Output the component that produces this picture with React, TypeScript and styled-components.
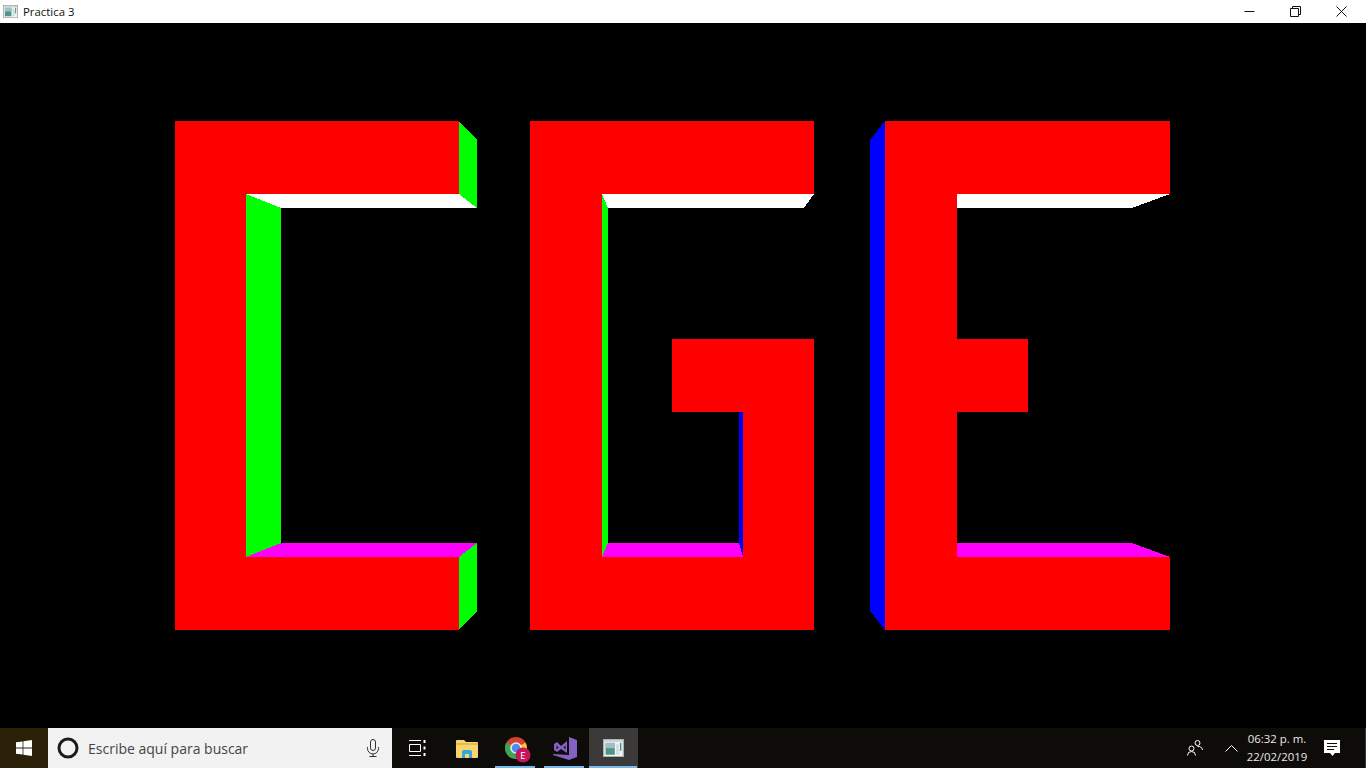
import React from 'react';
import styled, { createGlobalStyle } from 'styled-components';

const GlobalStyle = createGlobalStyle`
  html, body, #root {
    margin: 0;
    height: 100%;
    background: #000;
  }
  body {
    overflow: hidden;
    font-family: 'Open Sans', 'Noto Sans', sans-serif;
  }
`;

const Screen = styled.div`
  display: flex;
  flex-direction: column;
  width: 1366px;
  height: 768px;
`;

const TitleBar = styled.div`
  display: flex;
  align-items: center;
  flex: 0 0 23px;
  background: #fff;
  padding-left: 3px;
`;

const TitleText = styled.span`
  margin-left: 5px;
  font-size: 11.4px;
  line-height: 23px;
  color: #111;
`;

const WindowButtons = styled.div`
  display: flex;
  margin-left: auto;
  margin-right: 2px;
`;

const WindowButton = styled.div`
  display: flex;
  align-items: center;
  justify-content: center;
  width: 46px;
  height: 23px;
  color: #111;
`;

const Viewport = styled.svg`
  display: block;
  flex: 0 0 705px;
  width: 1366px;
  height: 705px;
  background: #000;
`;

const Taskbar = styled.div`
  display: flex;
  align-items: stretch;
  flex: 0 0 40px;
  background: #0e0c09;
`;

const StartButton = styled.div`
  display: flex;
  align-items: center;
  justify-content: center;
  width: 48px;
  background: #2a2108;
`;

const SearchBox = styled.div`
  display: flex;
  align-items: center;
  width: 344px;
  background: #f2f2f2;
  padding: 0 12px 0 9px;
  box-sizing: border-box;
`;

const SearchText = styled.span`
  margin-left: 9px;
  flex: 1;
  font-size: 14px;
  color: #444;
`;

const TaskButton = styled.div<{ $running?: boolean; $active?: boolean; $wide?: boolean }>`
  position: relative;
  display: flex;
  align-items: center;
  justify-content: center;
  width: ${({ $wide }) => ($wide ? 50 : 49)}px;
  background: ${({ $active }) => ($active ? '#3b3a38' : 'transparent')};
  &:after {
    content: '';
    display: ${({ $running }) => ($running ? 'block' : 'none')};
    position: absolute;
    bottom: 0;
    left: ${({ $active }) => ($active ? '0' : '4px')};
    right: ${({ $active }) => ($active ? '1px' : '5px')};
    height: 2px;
    background: #76b9ed;
  }
`;

const ChromeIcon = styled.svg`
  margin: 4px 0 0 5px;
`;

const Tray = styled.div`
  display: flex;
  align-items: center;
  margin-left: auto;
  color: #fff;
`;

const TrayIcon = styled.div<{ $width: number }>`
  display: flex;
  align-items: center;
  justify-content: center;
  width: ${({ $width }) => $width}px;
`;

const Clock = styled.div`
  width: 70px;
  text-align: center;
  font-size: 11.4px;
  line-height: 18px;
  color: #e8e8e8;
  white-space: nowrap;
`;

const ShowDesktop = styled.div`
  width: 0;
  height: 40px;
  margin-left: 13px;
  border-left: 1px solid #3a3a3a;
`;

const RED = '#ff0000';
const GREEN = '#00ff00';
const BLUE = '#0000ff';
const MAGENTA = '#ff00ff';
const WHITE = '#ffffff';

// bevels first, the front faces of the letters go over them
const bevels: [string, string][] = [
  ['459,121 477,140 477,208 459,194', GREEN],
  ['246,194 459,194 477,208 281,208', WHITE],
  ['246,194 281,208 281,543 246,557', GREEN],
  ['246,557 281,543 477,543 459,557', MAGENTA],
  ['459,557 477,543 477,611 459,630', GREEN],
  ['602,194 814,194 804,208 608,208', WHITE],
  ['602,194 608,208 608,543 602,557', GREEN],
  ['602,557 608,543 739,543 743,557', MAGENTA],
  ['739,412 743,412 743,557 739,543', BLUE],
  ['870,140 885,121 885,630 870,611', BLUE],
  ['957,194 1170,194 1132,208 957,208', WHITE],
  ['957,543 1132,543 1170,557 957,557', MAGENTA],
];

const faces = [
  '175,121 459,121 459,194 246,194 246,557 459,557 459,630 175,630',
  '530,121 814,121 814,194 602,194 602,557 743,557 743,412 672,412 672,339 814,339 814,630 530,630',
  '885,121 1170,121 1170,194 957,194 957,339 1028,339 1028,412 957,412 957,557 1170,557 1170,630 885,630',
];

const AppIcon = ({ size }: { size: number }) => (
  <svg width={size} height={size * 0.875} viewBox="0 0 16 14">
    <rect x="0.5" y="0.5" width="15" height="13" fill="#f4f6f6" stroke="#a9b2b5" />
    <rect x="1" y="1" width="14" height="1.500" fill="#c9d6de" />
    <rect x="2" y="3" width="7" height="9" fill="#4f9389" />
    <rect x="2" y="3" width="7" height="4" fill="#a5bcc2" />
    <rect x="10" y="4" width="2.500" height="8" fill="#d3dfd8" />
    <rect x="13" y="3" width="1" height="6" fill="#3f8a80" />
  </svg>
);

const App = () => (
  <Screen>
    <GlobalStyle />
    <TitleBar>
      <AppIcon size={15} />
      <TitleText>Practica 3</TitleText>
      <WindowButtons>
        <WindowButton>
          <svg width="11" height="11" viewBox="0 0 11 11">
            <path d="M0.5 5.5h10" stroke="currentColor" fill="none" />
          </svg>
        </WindowButton>
        <WindowButton>
          <svg width="11" height="11" viewBox="0 0 11 11">
            <path d="M0.5 2.5h8v8h-8zM2.5 2.5v-2h8v8h-2" stroke="currentColor" fill="none" />
          </svg>
        </WindowButton>
        <WindowButton>
          <svg width="11" height="11" viewBox="0 0 11 11">
            <path d="M0.5 0.5l10 10M10.5 0.5l-10 10" stroke="currentColor" fill="none" />
          </svg>
        </WindowButton>
      </WindowButtons>
    </TitleBar>

    <Viewport viewBox="0 23 1366 705" shapeRendering="crispEdges">
      {bevels.map(([points, color]) => (
        <polygon key={points} points={points} fill={color} />
      ))}
      {faces.map((points) => (
        <polygon key={points} points={points} fill={RED} />
      ))}
    </Viewport>

    <Taskbar>
      <StartButton>
        <svg width="16" height="16" viewBox="0 0 16 16" fill="#fff">
          <path d="M0 2.3l6.6-.9v6.2H0zM7.4 1.3L16 0v7.6H7.4zM0 8.4h6.6v6.2L0 13.7zM7.4 8.4H16V16l-8.6-1.3z" />
        </svg>
      </StartButton>
      <SearchBox>
        <svg width="22" height="22" viewBox="0 0 22 22">
          <circle cx="11" cy="11" r="9" fill="none" stroke="#1c1c1c" strokeWidth="3" />
        </svg>
        <SearchText>Escribe aquí para buscar</SearchText>
        <svg width="14" height="18" viewBox="0 0 14 18" fill="none" stroke="#333" strokeWidth="1">
          <rect x="4.5" y="0.5" width="5" height="11" rx="2.5" />
          <path d="M1.5 8v1.5a5.5 5.5 0 0 0 11 0V8M7 15v2.5M3.5 17.5h7" />
        </svg>
      </SearchBox>

      <TaskButton $wide>
        <svg width="17" height="16" viewBox="0 0 17 16" fill="none" stroke="#fff">
          <path d="M0 .5h12M0 15.5h12M.5 4.5h11v7H.5z" />
          <path d="M15.5 0v3M15.5 6.5v3M15.5 13v3" strokeWidth="2" />
        </svg>
      </TaskButton>
      <TaskButton>
        <svg width="22" height="19" viewBox="0 0 22 19">
          <path d="M0 2a1 1 0 0 1 1-1h7l2 2h11a1 1 0 0 1 1 1v14a1 1 0 0 1-1 1H1a1 1 0 0 1-1-1z" fill="#f9d56e" />
          <rect x="0" y="4" width="22" height="2" fill="#e7b94a" />
          <path d="M6 19v-6a2 2 0 0 1 2-2h6a2 2 0 0 1 2 2v6h-3v-4H9v4z" fill="#35a7dc" />
        </svg>
      </TaskButton>
      <TaskButton $running>
        <ChromeIcon width="26" height="26" viewBox="0 0 26 26">
          <circle cx="11" cy="11" r="11" fill="#d8402f" />
          <path d="M11 11L1.500 5.500A11 11 0 0 0 11 22z" fill="#3aa757" />
          <path d="M11 11v11A11 11 0 0 0 20.500 5.500z" fill="#fbc02d" />
          <circle cx="11" cy="11" r="5" fill="#4a8cf0" stroke="#e8e8e8" strokeWidth="1.600" />
          <circle cx="18" cy="18" r="7.500" fill="#c2185b" />
          <text x="18" y="21.500" fontSize="9.500" fill="#fff" textAnchor="middle" fontFamily="'Open Sans', sans-serif">E</text>
        </ChromeIcon>
      </TaskButton>
      <TaskButton $running>
        <svg width="24" height="23" viewBox="0 0 24 23" fill="#8661c5">
          <path d="M16 0l8 3v17l-8 3-16-5v-1l16 1z" />
          <path d="M1 7l3-2 4 4 6-5v12l-6-4-4 3-3-2zM3.500 8.500v4l2-2zM10.500 10.500l2 2v-4z" fillRule="evenodd" />
        </svg>
      </TaskButton>
      <TaskButton $running $active>
        <AppIcon size={21} />
      </TaskButton>

      <Tray>
        <TrayIcon $width={50}>
          <svg width="16" height="16" viewBox="0 0 16 16" fill="none" stroke="#fff">
            <circle cx="4.500" cy="8.500" r="2.500" />
            <path d="M.5 15.500a4 4 0 0 1 8 0" />
            <circle cx="10.500" cy="3" r="2.500" />
            <path d="M10.500 6.500a4.500 4.500 0 0 1 5 3.500" />
          </svg>
        </TrayIcon>
        <TrayIcon $width={22}>
          <svg width="13" height="7" viewBox="0 0 13 7" fill="none" stroke="#fff">
            <path d="M.5 6.500l6-6 6 6" />
          </svg>
        </TrayIcon>
        <Clock>
          <div>06:32 p. m.</div>
          <div>22/02/2019</div>
        </Clock>
        <TrayIcon $width={40}>
          <svg width="16" height="16" viewBox="0 0 16 16">
            <path d="M0 0h16v13h-5l-2.500 3-2.500-3H0z" fill="#fff" />
            <path d="M3 3.500h10M3 6.500h10M3 9.500h7" stroke="#0e0c09" />
          </svg>
        </TrayIcon>
        <ShowDesktop />
      </Tray>
    </Taskbar>
  </Screen>
);

export default App;
